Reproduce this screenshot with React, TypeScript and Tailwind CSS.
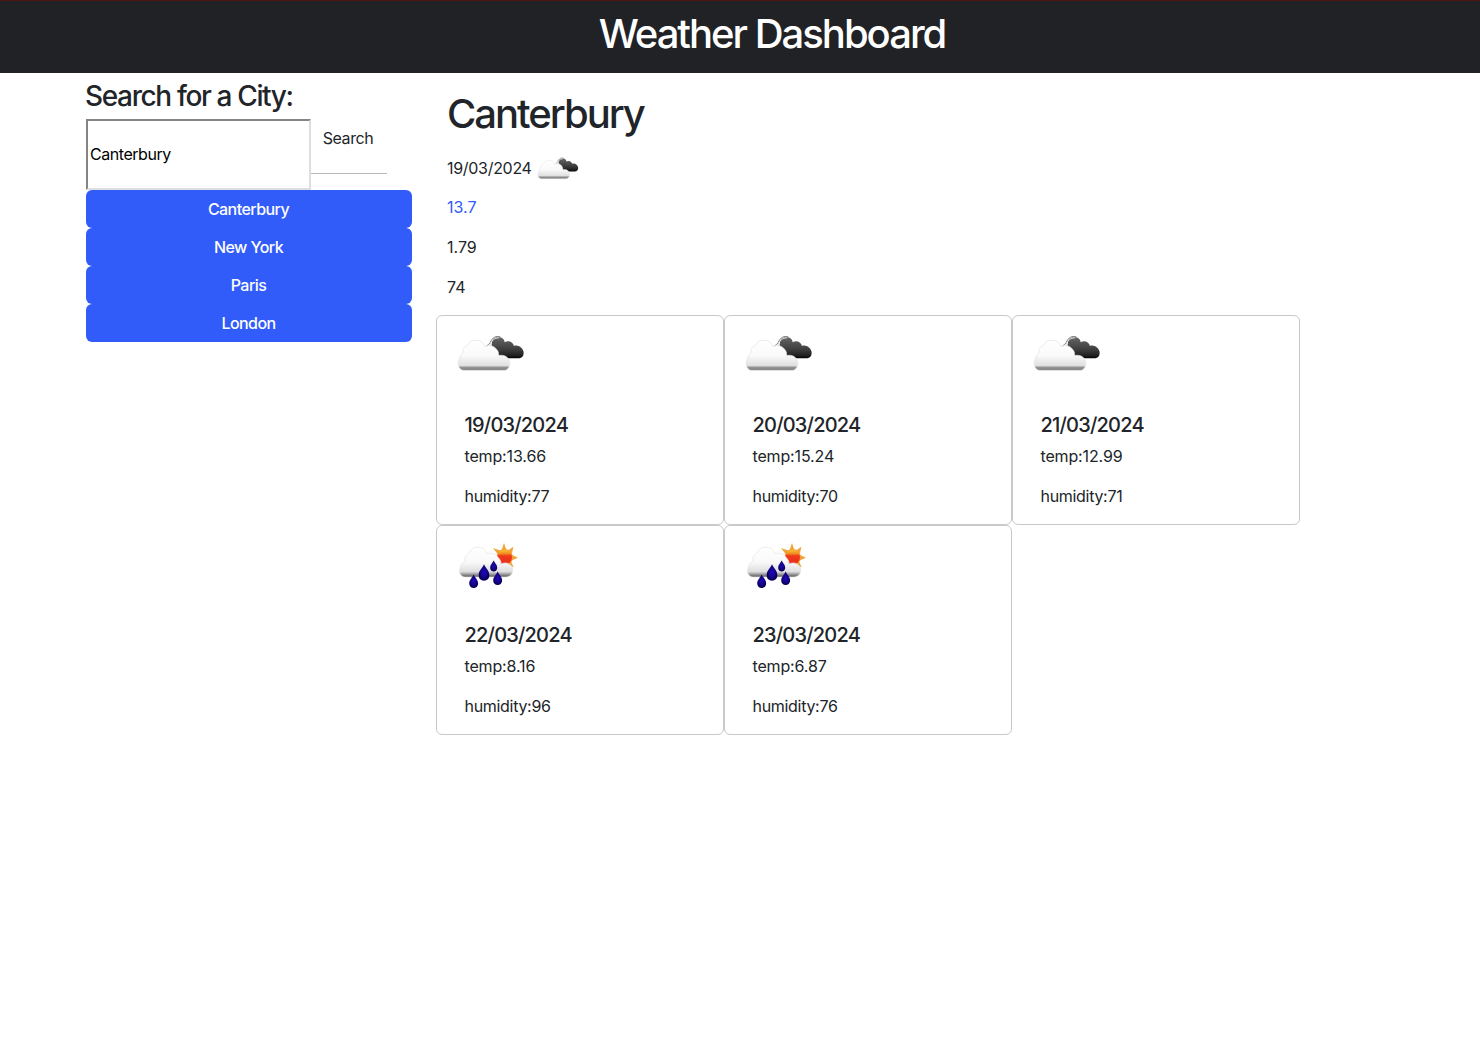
const queries = ["Canterbury", "New York", "Paris", "London"];

const forecast = [
  { date: "19/03/2024", temp: "13.66", humidity: "77", icon: "clouds" },
  { date: "20/03/2024", temp: "15.24", humidity: "70", icon: "clouds" },
  { date: "21/03/2024", temp: "12.99", humidity: "71", icon: "clouds" },
  { date: "22/03/2024", temp: "8.16", humidity: "96", icon: "rain" },
  { date: "23/03/2024", temp: "6.87", humidity: "76", icon: "rain" },
];

function Clouds({ id, className }: { id: string; className: string }) {
  return (
    <svg viewBox="75 66 210 120" className={className} aria-hidden="true">
      <defs>
        <linearGradient id={`${id}-dark`} x1="0" y1="0" x2="0" y2="1">
          <stop offset="0" stopColor="#666" />
          <stop offset="0.6" stopColor="#3c3c3c" />
          <stop offset="0.85" stopColor="#222" />
          <stop offset="1" stopColor="#050505" />
        </linearGradient>
        <linearGradient id={`${id}-light`} x1="0" y1="0" x2="0" y2="1">
          <stop offset="0" stopColor="#fff" />
          <stop offset="0.5" stopColor="#fafafa" />
          <stop offset="0.84" stopColor="#e0e0e0" />
          <stop offset="0.9" stopColor="#959595" />
          <stop offset="1" stopColor="#777" />
        </linearGradient>
      </defs>
      <path d="M186 98C186 86 197 81 207 82C218 82 223 89 224 97C234 90 249 95 252 108C264 103 281 115 281 128C281 139 274 145 264 145H222C206 144 206 132 199 127C190 120 182 112 186 98Z" fill={`url(#${id}-dark)`} />
      <path d="M168 110C174 103 177 104 181 97C186 83 199 76 211 81" fill="none" stroke="#777" strokeWidth="3" />
      <path d="M179 108C183 92 194 83 207 84" fill="none" stroke="#d8d8d8" strokeWidth="3" />
      <path d="M101 181C90 181 83 169 85 157C87 145 91 134 99 129C98 116 103 107 113 106C116 95 128 90 141 91C154 92 162 100 164 110C174 105 188 106 195 113C203 119 207 127 206 137C223 132 239 143 239 158C240 170 234 181 222 181Z" fill={`url(#${id}-light)`} stroke="#e2e2e2" strokeWidth="2" />
    </svg>
  );
}

function Rain({ id }: { id: string }) {
  const drop = "M0-26C5-14 16-7 16 6C16 17 9 23 0 23S-16 17-16 6C-16-7-5-14 0-26Z";
  return (
    <svg viewBox="81 60 192 150" className="ml-[2px] h-[50px] w-16" aria-hidden="true">
      <defs>
        <linearGradient id={`${id}-sun`} x1="0" y1="0" x2="0" y2="1">
          <stop offset="0" stopColor="#f8c633" />
          <stop offset="0.25" stopColor="#f08a20" />
          <stop offset="0.4" stopColor="#ee3a1c" />
          <stop offset="1" stopColor="#f02a18" />
        </linearGradient>
        <linearGradient id={`${id}-cloud`} x1="0" y1="0" x2="0" y2="1">
          <stop offset="0" stopColor="#fff" />
          <stop offset="0.5" stopColor="#f9f9f9" />
          <stop offset="0.82" stopColor="#dedede" />
          <stop offset="1" stopColor="#555" />
        </linearGradient>
        <radialGradient id={`${id}-drop`}>
          <stop offset="0" stopColor="#2108b8" />
          <stop offset="0.55" stopColor="#15058f" />
          <stop offset="1" stopColor="#080050" />
        </radialGradient>
      </defs>
      <path d="M215 90L222 69L229 90ZM233 92L250 80L246 100ZM246 105L264 113L246 121ZM244 126L251 142L234 134ZM205 105L189 84L213 92ZM202 108L192 106L202 118Z" fill="#f0a338" />
      <circle cx="224" cy="112" r="25" fill="#f0a338" />
      <circle cx="224" cy="112" r="22" fill={`url(#${id}-sun)`} />
      <path d="M106 171C94 171 87 161 89 149C90 138 95 128 104 124C104 109 110 101 119 98C121 87 132 81 145 82C159 83 169 91 170 102C184 96 199 102 205 113C211 119 214 125 213 132C230 123 248 134 248 150C248 164 239 171 225 171Z" fill={`url(#${id}-cloud)`} stroke="#e3e3e3" strokeWidth="2" />
      <g fill={`url(#${id}-drop)`}>
        <path d={drop} transform="translate(162 159)" />
        <path d={drop} transform="translate(191 139) scale(.66)" />
        <path d={drop} transform="translate(131 185) scale(.84)" />
        <path d={drop} transform="translate(203 176) scale(.84)" />
      </g>
    </svg>
  );
}

export default function App() {
  return (
    <div className="min-h-screen bg-white font-['Inter',sans-serif] text-base tracking-[-0.3px] text-[#212529]">
      <header className="flex h-[73px] justify-center border-t border-[#4a1710] bg-[#212226] pt-[9px] pl-[64px]">
        <h1 className="text-[40px] leading-[48px] font-[540] tracking-[-2px] text-white">Weather Dashboard</h1>
      </header>
      <main className="flex pl-[86px]">
        <aside className="w-[326px] pt-[6px]">
          <h2 className="-ml-px h-[40px] text-[28px] leading-[34px] font-[540] tracking-[-1.36px]">Search for a City:</h2>
          <div className="flex h-[71px]">
            <input defaultValue="Canterbury" className="h-[71px] w-[225px] border-2 border-t-[#858585] border-r-[#dedede] border-b-[#dedede] border-l-[#858585] px-[2px] pb-[2px] tracking-[-0.45px] text-black outline-none" />
            <button className="h-[55px] w-[76px] border-b border-[#bbb] pr-[2px] pb-4 text-center tracking-[-0.4px]">Search</button>
          </div>
          <div className="flex flex-col">
            {queries.map((q) => (
              <button key={q} className="h-[38px] rounded-md bg-[#315cf9] pr-px text-center font-[450] tracking-[-0.55px] text-white">{q}</button>
            ))}
          </div>
        </aside>
        <section className="ml-6 w-[864px] pt-[17px]">
          <div className="pl-[11px]">
            <h2 className="h-[56px] text-[40px] leading-[48px] font-[540] tracking-[-2px]">Canterbury</h2>
            <p className="flex h-[49px] items-start leading-[44px]">
              <span className="w-[84px]">19/03/2024</span>
              <Clouds id="now" className="mt-[9px] ml-[4.5px] h-[25px] w-[43px]" />
            </p>
            <p className="h-[40px] leading-6 tracking-normal text-[#315cf9]">13.7</p>
            <p className="h-[40px] leading-6 tracking-normal">1.79</p>
            <p className="h-[40px] leading-6 tracking-normal">74</p>
          </div>
          <div className="grid grid-cols-3">
            {forecast.map((d) => (
              <article key={d.date} className="h-[210px] rounded-md border border-[#c9c9c9]">
                <div className="h-[96px] pt-[14px] pl-[18px]">
                  {d.icon === "clouds" ? (
                    <Clouds id={`c${d.date.slice(0, 2)}`} className="mt-[2px] h-10 w-[70px]" />
                  ) : (
                    <Rain id={`r${d.date.slice(0, 2)}`} />
                  )}
                </div>
                <div className="pl-[27.5px]">
                  <h5 className="h-8 pt-px text-xl leading-6 font-[540] tracking-[-0.8px]">{d.date}</h5>
                  <p className="h-10 leading-6 tracking-[-0.15px]">temp:{d.temp}</p>
                  <p className="leading-6">humidity:{d.humidity}</p>
                </div>
              </article>
            ))}
          </div>
        </section>
      </main>
    </div>
  );
}
